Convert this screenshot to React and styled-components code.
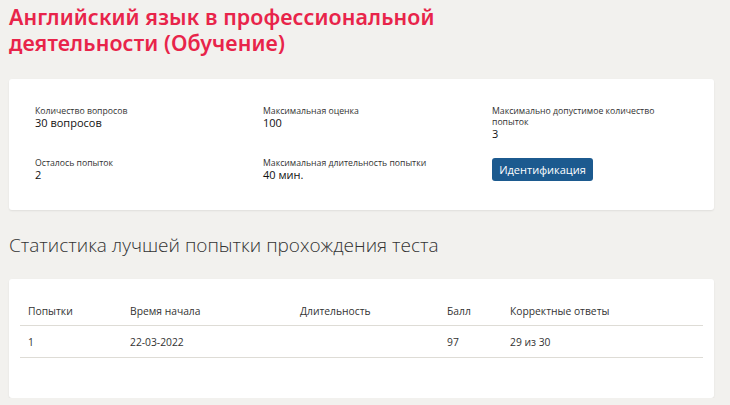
import React from "react";
import styled, { createGlobalStyle } from "styled-components";

const Global = createGlobalStyle`
  html, body { margin: 0; padding: 0; background: #f2f1ee; }
  body { font-family: "Open Sans", "Noto Sans", sans-serif; color: #222; }
`;

const Page = styled.div`
  padding: 4px 16px 0 9px;
  width: 730px;
  box-sizing: border-box;
`;

const Title = styled.h1`
  margin: 0;
  font-family: "Noto Sans", sans-serif;
  font-weight: 600;
  font-size: 21.4px;
  line-height: 26px;
  color: #e8244a;
  letter-spacing: 0.1px;
`;

const Card = styled.div`
  background: #fff;
  border-radius: 3px;
  box-shadow: 0 1px 2px rgba(0, 0, 0, 0.08);
  margin-top: ${(p) => p.$mt}px;
  padding: ${(p) => p.$pad};
  height: ${(p) => p.$h}px;
  box-sizing: border-box;
`;

const InfoGrid = styled.div`
  display: grid;
  grid-template-columns: 228px 229px 200px;
  grid-template-rows: 52px auto;
`;

const Info = styled.div`
  display: flex;
  flex-direction: column;
`;

const Label = styled.span`
  font-size: 8.7px;
  line-height: 11px;
  color: #333;
  width: ${(p) => p.$w || 180}px;
`;

const Value = styled.span`
  font-size: 11px;
  line-height: 12px;
  color: #111;
`;

const Button = styled.button`
  align-self: flex-start;
  width: 101px;
  height: 23px;
  border: 0;
  border-radius: 3px;
  background: #1c5a8f;
  color: #fff;
  font-family: "Open Sans", sans-serif;
  font-size: 11px;
  padding: 0;
  cursor: pointer;
`;

const SubTitle = styled.h2`
  margin: 23px 0 0;
  font-weight: 300;
  font-size: 19px;
  line-height: 24px;
  color: #333;
`;

const Table = styled.table`
  width: 683px;
  table-layout: fixed;
  border-collapse: collapse;
  font-size: 10.3px;
  color: #333;
`;

const Col = styled.col`
  width: ${(p) => (p.$w ? `${p.$w}px` : "auto")};
`;

const Th = styled.th`
  text-align: left;
  font-weight: 400;
  padding: 0 0 0 8px;
  height: 29px;
  vertical-align: middle;
  border-bottom: 1px solid #dedcd6;
`;

const Td = styled.td`
  padding: 0 0 0 8px;
  height: 31px;
  border-bottom: 1px solid #dedcd6;
`;

export default function App() {
  return (
    <>
      <Global />
      <Page>
        <Title>
          Английский язык в профессиональной
          <br />
          деятельности (Обучение)
        </Title>
        <Card $mt={23} $pad="27px 26px 0" $h={131}>
          <InfoGrid>
            <Info>
              <Label>Количество вопросов</Label>
              <Value>30 вопросов</Value>
            </Info>
            <Info>
              <Label>Максимальная оценка</Label>
              <Value>100</Value>
            </Info>
            <Info>
              <Label $w={170}>Максимально допустимое количество попыток</Label>
              <Value>3</Value>
            </Info>
            <Info>
              <Label>Осталось попыток</Label>
              <Value>2</Value>
            </Info>
            <Info>
              <Label>Максимальная длительность попытки</Label>
              <Value>40 мин.</Value>
            </Info>
            <Info>
              <Button>Идентификация</Button>
            </Info>
          </InfoGrid>
        </Card>
        <SubTitle>Статистика лучшей попытки прохождения теста</SubTitle>
        <Card $mt={22} $pad="17px 11px 0" $h={119}>
          <Table>
            <colgroup>
              <Col $w={102} />
              <Col $w={170} />
              <Col $w={147} />
              <Col $w={63} />
              <Col />
            </colgroup>
            <thead>
              <tr>
                <Th>Попытки</Th>
                <Th>Время начала</Th>
                <Th>Длительность</Th>
                <Th>Балл</Th>
                <Th>Корректные ответы</Th>
              </tr>
            </thead>
            <tbody>
              <tr>
                <Td>1</Td>
                <Td>22-03-2022</Td>
                <Td></Td>
                <Td>97</Td>
                <Td>29 из 30</Td>
              </tr>
            </tbody>
          </Table>
        </Card>
      </Page>
    </>
  );
}
